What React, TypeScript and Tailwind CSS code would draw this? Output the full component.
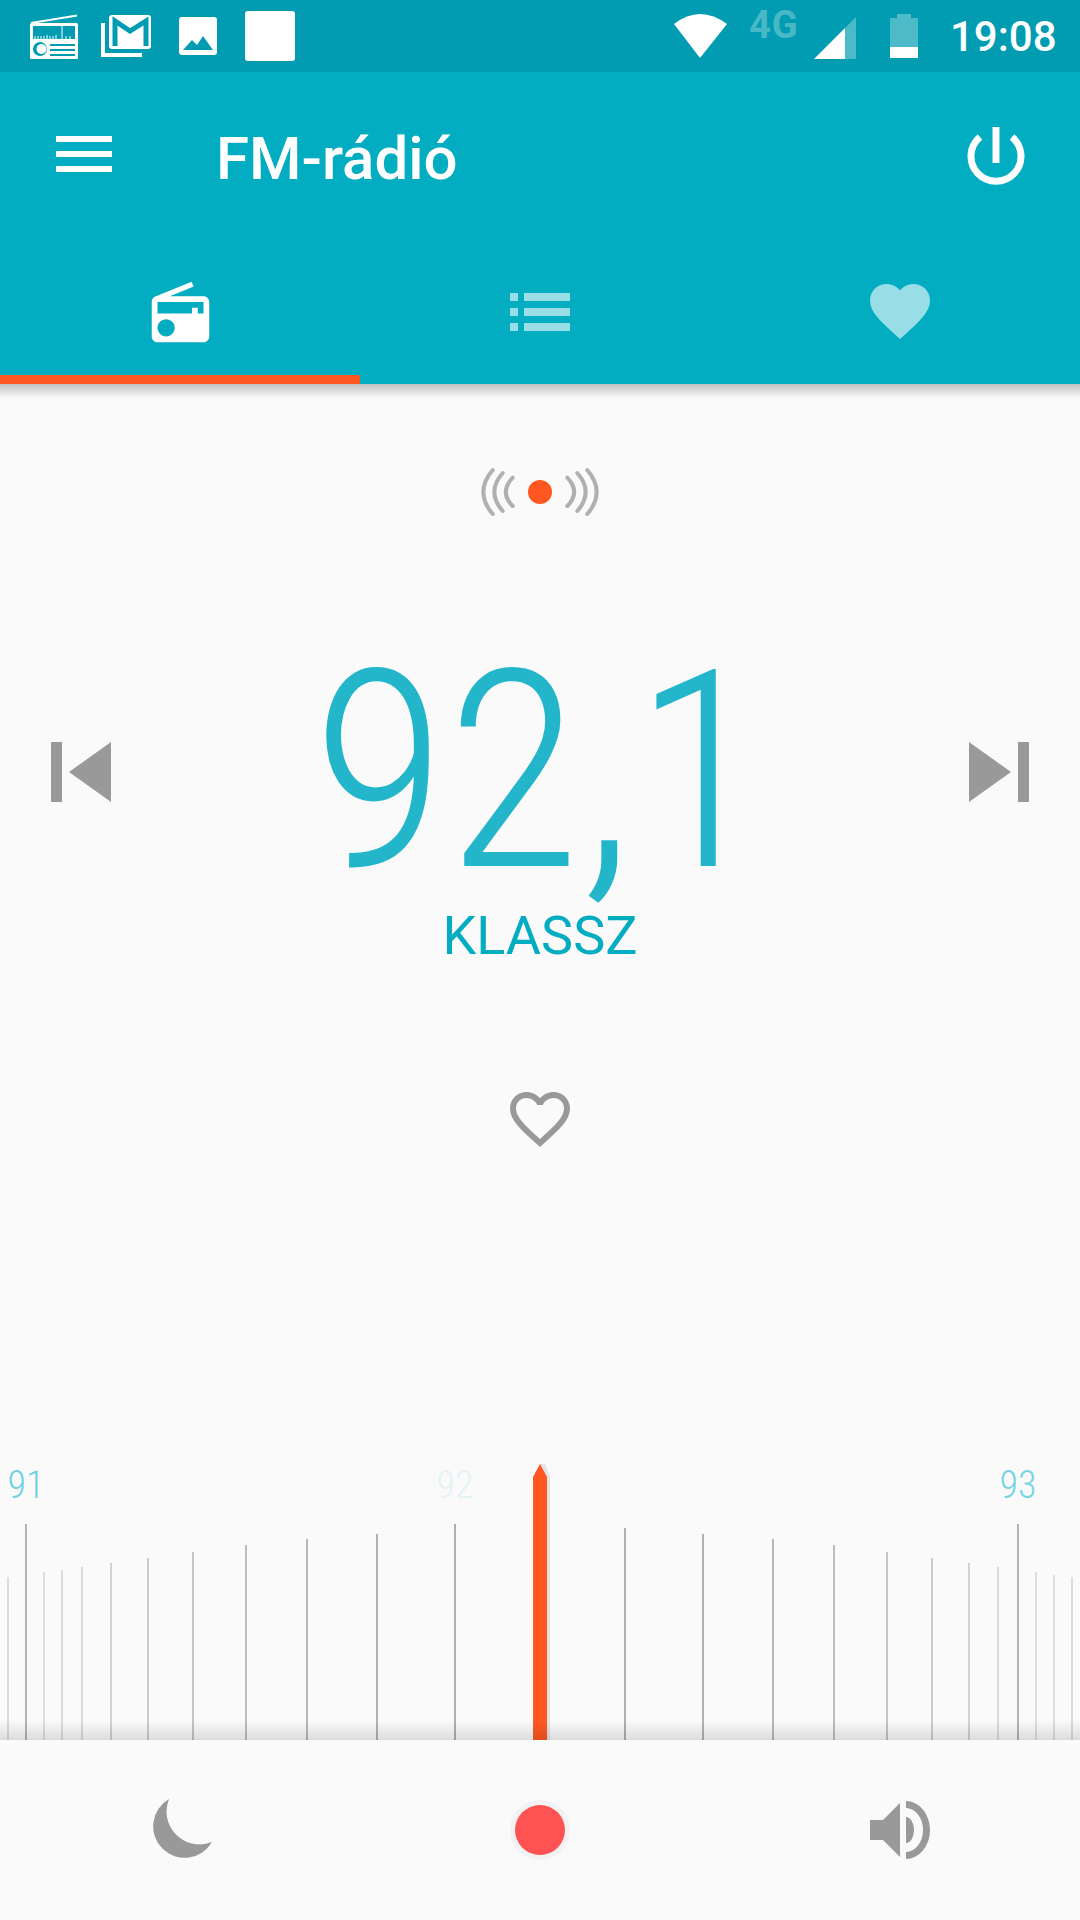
const ticks: [number, number, string][] = [
  [8, 1577, "#dcdcdc"], [26, 1524, "#b4b4b4"], [44, 1572, "#dedede"], [62, 1570, "#dcdcdc"],
  [82, 1567, "#dadada"], [111, 1563, "#d2d2d2"], [148, 1558, "#cccccc"], [193, 1552, "#c4c4c4"],
  [246, 1545, "#bdbdbd"], [307, 1539, "#b8b8b8"], [377, 1534, "#b2b2b2"], [455, 1524, "#b0b0b0"],
  [625, 1528, "#b0b0b0"], [703, 1534, "#b2b2b2"], [773, 1539, "#b8b8b8"], [834, 1545, "#bdbdbd"],
  [887, 1552, "#c4c4c4"], [932, 1558, "#cccccc"], [969, 1563, "#d2d2d2"], [998, 1567, "#dadada"],
  [1018, 1524, "#b4b4b4"], [1036, 1572, "#dedede"], [1054, 1575, "#dedede"], [1072, 1577, "#dcdcdc"],
];

function StatusBar() {
  return (
    <div className="flex h-[72px] shrink-0 items-start bg-[#019cb1] font-['Roboto',sans-serif] text-white">
      <svg className="ml-[30px] mt-[14px] h-[46px] w-[48px] shrink-0" viewBox="30 14 48 46">
        <path d="M31 23 77 15.5" stroke="#fff" strokeWidth="2" />
        <rect x="30" y="23" width="48" height="36" rx="1.5" fill="#fff" />
        <rect x="33" y="26" width="42" height="13" fill="#019cb1" />
        <path d="M35 39v-3M38 39v-3M41 39v-3M44 39v-3M47 39v-4M50 39v-3M53 39v-3M56 39v-4M62 39v-13M66 39v-3M70 39v-3" stroke="#fff" strokeWidth="1" />
        <circle cx="40" cy="49" r="7" fill="#019cb1" />
        <circle cx="41.5" cy="49" r="5" fill="#fff" />
        <path d="M50 45h25M50 50h25M50 55h25" stroke="#019cb1" strokeWidth="2" />
      </svg>
      <svg className="ml-[23px] mt-[14px] h-[44px] w-[50px] shrink-0" viewBox="101 14 50 44">
        <path d="M103 23v32h39" fill="none" stroke="#fff" strokeWidth="4" />
        <rect x="109" y="15" width="42" height="34" rx="3" fill="#fff" />
        <path d="M115 46V21l15 10 16-10v25" fill="none" stroke="#019cb1" strokeWidth="5" />
      </svg>
      <svg className="ml-[28px] mt-[17px] h-[38px] w-[38px] shrink-0" viewBox="179 17 38 38">
        <rect x="179" y="17" width="38" height="38" rx="3" fill="#fff" />
        <path d="M183 50 192 40l5 5 6-9 10 14Z" fill="#019cb1" />
      </svg>
      <div className="ml-[28px] mt-[11px] h-[50px] w-[50px] shrink-0 rounded-[3px] bg-white" />
      <svg className="ml-[379px] mt-[14px] h-[44px] w-[54px] shrink-0" viewBox="674 14 54 44">
        <path d="M674 24Q700 4 727 24L700 58Z" fill="#fff" />
      </svg>
      <span className="ml-[21px] mt-[2px] w-[51px] shrink-0 text-[38px] font-bold leading-[46px] tracking-[1px] text-white/30">4G</span>
      <svg className="ml-[14px] mt-[17px] h-[42px] w-[42px] shrink-0" viewBox="814 17 42 42">
        <path d="M845 28 856 17V59H845Z" fill="#fff" fillOpacity=".3" />
        <path d="M814 59 845 28V59Z" fill="#fff" />
      </svg>
      <svg className="ml-[34px] mt-[14px] h-[44px] w-[28px] shrink-0" viewBox="890 14 28 44">
        <path d="M897 14h14v4h7v29h-28V18h7Z" fill="#fff" fillOpacity=".3" />
        <rect x="890" y="47" width="28" height="11" fill="#fff" />
      </svg>
      <span className="ml-[32px] mt-[12px] shrink-0 text-[42px] font-medium leading-[50px]">19:08</span>
    </div>
  );
}

function AppBar() {
  return (
    <div className="shrink-0 bg-[#02acc1] font-['Roboto',sans-serif] text-white">
      <div className="flex h-[164px] items-center">
        <svg className="ml-[47px] h-[72px] w-[72px] shrink-0" viewBox="0 0 72 72" fill="#fff">
          <path d="M9 18h56v6H9zM9 33h56v6H9zM9 48h56v6H9z" />
        </svg>
        <h1 className="ml-[97px] mt-[10px] text-[60px] font-medium leading-none">FM-rádió</h1>
        <svg className="ml-auto mr-[54px] mt-[6px] h-[64px] w-[60px] shrink-0" viewBox="0 0 60 64" fill="none" stroke="#fff">
          <path d="M30 2v36" strokeWidth="7" />
          <path d="M14 12a25 25 0 1 0 32 0" strokeWidth="7" />
        </svg>
      </div>
      <div className="grid h-[139px] grid-cols-3 pt-[40px]">
        <div className="flex justify-center">
          <svg className="h-[69px] w-[69px]" viewBox="0 -1 24 24" fill="#fff">
            <path d="M3.24 6.15C2.51 6.43 2 7.17 2 8v12c0 1.1.89 2 2 2h16c1.11 0 2-.9 2-2V8c0-1.11-.89-2-2-2H8.3l8.26-3.34L15.88 1 3.24 6.15zM7 20c-1.66 0-3-1.34-3-3s1.34-3 3-3 3 1.34 3 3-1.34 3-3 3zm13-8h-2v-2h-2v2H4V8h16v4z" />
          </svg>
        </div>
        <div className="flex justify-center">
          <svg className="h-[72px] w-[72px]" viewBox="0 0 72 72" fill="#fff" fillOpacity=".6">
            <path d="M6 17h8v8H6zM20 17h46v8H20zM6 32h8v8H6zM20 32h46v8H20zM6 47h8v8H6zM20 47h46v8H20z" />
          </svg>
        </div>
        <div className="flex justify-center">
          <svg className="h-[72px] w-[72px]" viewBox="0 0.33 24 24" fill="#fff" fillOpacity=".6">
            <path d="M12 21.35l-1.45-1.32C5.4 15.36 2 12.28 2 8.5 2 5.42 4.42 3 7.5 3c1.74 0 3.41.81 4.5 2.09C13.09 3.81 14.76 3 16.5 3 19.58 3 22 5.42 22 8.5c0 3.78-3.4 6.86-8.55 11.54L12 21.35z" />
          </svg>
        </div>
      </div>
      <div className="h-[9px] w-[360px] bg-[#ff5722]" />
    </div>
  );
}

function Dial() {
  return (
    <div className="relative mt-auto h-[276px] w-full shrink-0 font-['Roboto',sans-serif] text-[38px] font-[350] leading-[40px] [font-stretch:85%]">
      <svg className="h-[276px] w-[1080px]" viewBox="0 1464 1080 276">
        {ticks.map(([x, top, color]) => (
          <line key={x} x1={x} x2={x} y1={top} y2="1740" stroke={color} strokeWidth="2" />
        ))}
        <path d="M536 1477 540 1464 545 1464 550 1477V1740H536Z" fill="#e3e3e3" />
        <path d="M533 1477 540 1464 547 1477V1740H533Z" fill="#ff5722" />
      </svg>
      <span className="absolute left-[6px] top-[1px] w-[40px] text-center text-[#6cd2e0]">91</span>
      <span className="absolute left-[435px] top-[1px] w-[40px] text-center text-[#e3f3f6]">92</span>
      <span className="absolute left-[998px] top-[1px] w-[40px] text-center text-[#74d4e2]">93</span>
      <div className="absolute inset-x-0 bottom-0 h-[20px] bg-linear-to-b from-black/0 to-black/12" />
    </div>
  );
}

function BottomBar() {
  return (
    <div className="flex h-[180px] shrink-0 items-center justify-between bg-[#fafafa]">
      <svg className="ml-[152px] mb-[2px] h-[62px] w-[62px]" viewBox="0 0 62 62" fill="#999">
        <path d="M17 1A31.5 31.5 0 1 0 60 44 33 33 0 0 1 17 1Z" />
      </svg>
      <div className="mr-[4px] flex h-[60px] w-[60px] items-center justify-center rounded-full bg-[#f2f2f2]">
        <div className="h-[50px] w-[50px] rounded-full bg-[#ff5252]" />
      </div>
      <svg className="mr-[150px] h-[60px] w-[60px]" viewBox="870 1800 60 60" fill="#999">
        <path d="M870 1820h13l17-17v54l-17-17h-13Z" />
        <path d="M906 1817a8 13 0 0 1 0 26Z" />
        <path d="M906 1801a24 29 0 0 1 0 58v-7a17 22 0 0 0 0-44Z" />
      </svg>
    </div>
  );
}

export default function App() {
  return (
    <div className="flex h-[1920px] w-[1080px] flex-col overflow-hidden bg-[#fafafa]">
      <StatusBar />
      <AppBar />
      <div className="flex min-h-0 flex-1 flex-col items-center font-['Roboto',sans-serif]">
        <div className="h-[14px] w-full shrink-0 bg-linear-to-b from-[#c2c2c2] to-[#fafafa]" />
        <svg className="mt-[68px] h-[52px] w-[120px] shrink-0" viewBox="480 466 120 52" fill="none" stroke="#b0b0b0" strokeWidth="4" strokeLinecap="round">
          <path d="M512.7 477.7Q499 492 512.7 506M502.7 473Q486 492 502.7 511M492.7 470Q474 492 492.7 514" />
          <path d="M567.3 477.7Q581 492 567.3 506M577.3 473Q594 492 577.3 511M587.3 470Q606 492 587.3 514" />
          <circle cx="540" cy="492" r="12" fill="#ff5722" stroke="none" />
        </svg>
        <div className="mt-[118px] flex h-[272px] w-full shrink-0 items-center justify-between px-[51px]">
          <svg className="h-[60px] w-[60px]" viewBox="0 0 60 60" fill="#999">
            <path d="M0 0h11v60H0zM60 0v60L18 30Z" />
          </svg>
          <span className="text-[276px] font-[280] leading-[272px] text-[#23b6ca] [font-stretch:85%]">92,1</span>
          <svg className="h-[60px] w-[60px]" viewBox="0 0 60 60" fill="#999">
            <path d="M60 0H49v60h11zM0 0v60l42-30Z" />
          </svg>
        </div>
        <div className="text-[54px] leading-[55px] text-[#02acc1]">KLASSZ</div>
        <svg className="mt-[120px] h-[72px] w-[72px] shrink-0" viewBox="0 0 24 24" fill="#999">
          <path d="M16.5 3c-1.74 0-3.41.81-4.5 2.09C10.91 3.81 9.24 3 7.5 3 4.42 3 2 5.42 2 8.5c0 3.78 3.4 6.86 8.55 11.54L12 21.35l1.45-1.32C18.6 15.36 22 12.28 22 8.5 22 5.42 19.58 3 16.5 3zm-4.4 15.55l-.1.1-.1-.1C7.14 14.24 4 11.39 4 8.5 4 6.5 5.5 5 7.5 5c1.54 0 3.04.99 3.57 2.36h1.87C13.46 5.99 14.96 5 16.5 5c2 0 3.5 1.5 3.5 3.5 0 2.89-3.14 5.74-7.9 10.05z" />
        </svg>
        <Dial />
      </div>
      <BottomBar />
    </div>
  );
}
